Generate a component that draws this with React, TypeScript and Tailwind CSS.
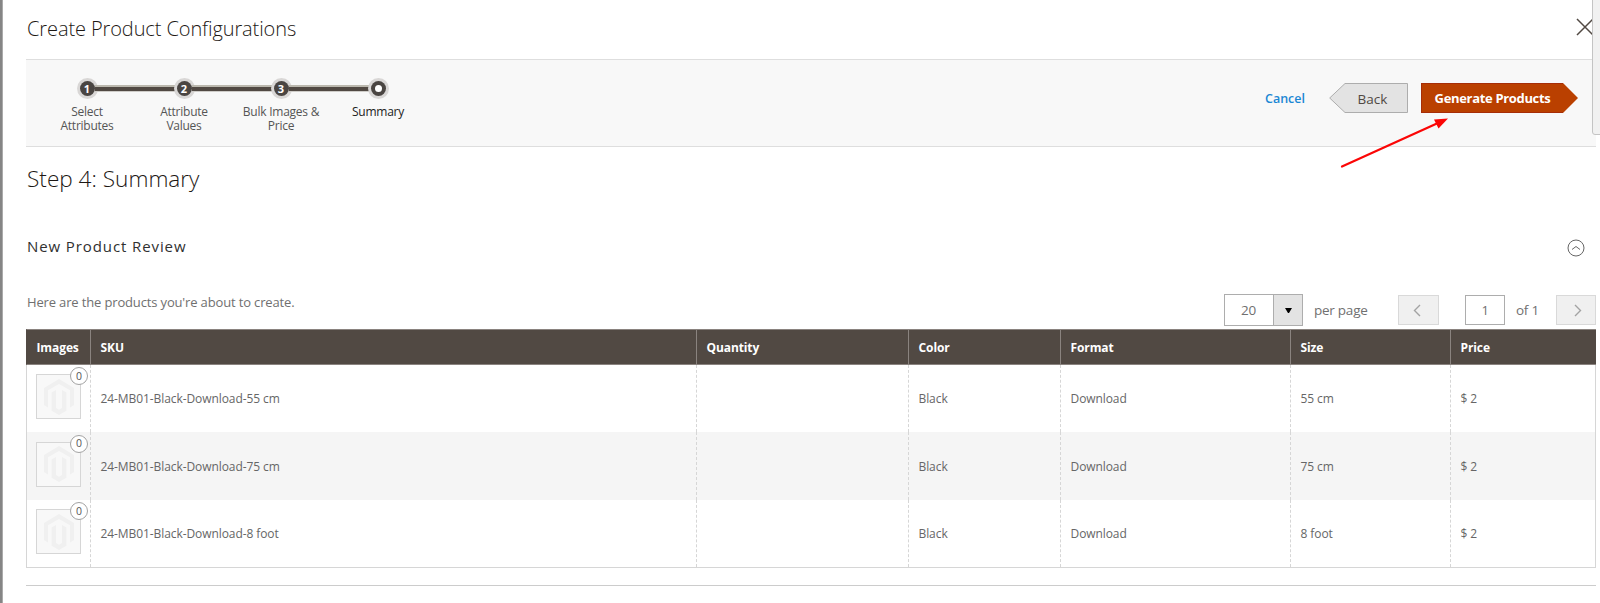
import React from "react";
import clsx from "clsx";

const steps = [
  { label: "Select Attributes", done: true },
  { label: "Attribute Values", done: true },
  { label: "Bulk Images & Price", done: true },
  { label: "Summary", done: false },
];

const columns = [
  { title: "Images", width: "w-[64px]" },
  { title: "SKU", width: "w-[606px]" },
  { title: "Quantity", width: "w-[212px]" },
  { title: "Color", width: "w-[152px]" },
  { title: "Format", width: "w-[230px]" },
  { title: "Size", width: "w-[160px]" },
  { title: "Price", width: "w-[146px]" },
];

const products = [
  { sku: "24-MB01-Black-Download-55 cm", size: "55 cm" },
  { sku: "24-MB01-Black-Download-75 cm", size: "75 cm" },
  { sku: "24-MB01-Black-Download-8 foot", size: "8 foot" },
];

const Placeholder = () => (
  <div className="relative ml-[9px] mb-[4px] flex h-[45px] w-[45px] items-center justify-center border border-[#d6d6d6] bg-[#f8f8f8]">
    <svg width="30" height="36" viewBox="0 0 30 36" fill="#f0f0f0">
      <path d="M15 0 30 9v17l-4 2.5V11.3L15 5 4 11.3v17.2L0 26V9z" />
      <path d="M15 36l-7.4-4.3V13.6L12 11v18l3 1.8 3-1.8V11l4.4 2.6v18.1z" />
    </svg>
    <span className="absolute -top-[8px] -right-[8px] flex h-[18px] w-[18px] items-center justify-center rounded-full border border-[#a3a3a3] bg-white text-[10.5px] leading-none text-[#555]">
      0
    </span>
  </div>
);

const Steps = () => (
  <ul className="ml-[12.5px] flex pt-[18px]">
    {steps.map((step, i) => (
      <li key={step.label} className="relative w-[97px] text-center">
        {i > 0 && (
          <div className="absolute top-[7px] -left-[41px] h-[7px] w-[82px] border-t-2 border-b border-t-[#bbb8ae] border-b-[#cfcdc9] bg-[#514943]" />
        )}
        <div className="relative mx-auto flex h-[21px] w-[21px] items-center justify-center rounded-full bg-[#d9d7d6]">
          <div className="z-10 flex h-[15px] w-[15px] items-center justify-center rounded-full bg-[#4a4542] text-[11px] leading-none font-bold text-white">
            {step.done ? (
              i + 1
            ) : (
              <span className="h-[7px] w-[7px] rounded-full bg-white" />
            )}
          </div>
        </div>
        <p
          className={clsx(
            "mx-auto mt-[6px] w-[82px] text-[12px] leading-[13.6px] tracking-[-0.25px]",
            step.done ? "text-[#555]" : "text-[#222]"
          )}
        >
          {step.label}
        </p>
      </li>
    ))}
  </ul>
);

const Actions = () => (
  <div className="mr-[18px] flex h-[30px] items-center text-[13px]">
    <a className="mt-[2px] mr-[24px] text-[12.5px] font-semibold text-[#1b87d4]">
      Cancel
    </a>
    <button className="relative mr-[13px] h-[30px] w-[79px]">
      <svg className="absolute inset-0" width="79" height="30">
        <path d="M.7 15 16 .5h62.5v29H16z" fill="#e3e3e3" stroke="#adadad" />
      </svg>
      <span className="relative top-px left-[4px] text-[13.5px] text-[#514943]">
        Back
      </span>
    </button>
    <button className="relative h-[30px] w-[157px]">
      <svg className="absolute inset-0" width="157" height="30">
        <path d="M0 0h142l15 15-15 15H0z" fill="#ba4000" />
        <path d="M0 .5h142M0 29.5h142M.5 0v30" stroke="#a62d08" />
      </svg>
      <span className="relative top-px -left-[7px] text-[13px] font-bold tracking-[-0.33px] text-white">
        Generate Products
      </span>
    </button>
  </div>
);

const Pager = () => (
  <div className="flex items-center text-[13.5px] tracking-[-0.25px] text-[#707070]">
    <div className="flex h-[32px] w-[79px] border border-[#adadad]">
      <span className="flex flex-1 items-center justify-center pr-px">20</span>
      <span className="flex w-[29px] items-center justify-center border-l border-[#adadad] bg-[#e3e3e3]">
        <svg width="7" height="5">
          <path d="M0 0h7L4 5H3z" fill="#000" />
        </svg>
      </span>
    </div>
    <span className="ml-[11px] w-[84px]">per page</span>
    <button className="flex h-[30px] w-[41px] items-center justify-center border border-[#d9d9d9] bg-[#f0f0f0] pr-[3px]">
      <svg width="8" height="13" fill="none" stroke="#a3a3a3" strokeWidth="1.4">
        <path d="M7 1 1.5 6.5 7 12" />
      </svg>
    </button>
    <span className="ml-[26px] flex h-[30px] w-[40px] items-center justify-center border border-[#adadad] pt-px text-[13px]">
      1
    </span>
    <span className="ml-[11px] w-[40px]">of 1</span>
    <button className="flex h-[30px] w-[40px] items-center justify-center border border-[#d9d9d9] bg-[#f0f0f0] pl-[4px]">
      <svg width="8" height="13" fill="none" stroke="#a3a3a3" strokeWidth="1.4">
        <path d="M1 1l5.5 5.5L1 12" />
      </svg>
    </button>
  </div>
);

const App = () => {
  return (
    <div className="relative flex h-[603px] w-[1600px] overflow-hidden bg-white font-['Open_Sans',sans-serif] text-[#555]">
      <div className="w-[3px] shrink-0 border-r border-[#aaa] bg-[#858585]" />
      <div className="ml-[23px] w-[1570px] shrink-0">
        <header className="flex h-[59px] items-center justify-between">
          <h1 className="-mt-[2px] ml-px text-[20px] leading-[28px] font-light tracking-[-0.1px] text-[#1d1814]">
            Create Product Configurations
          </h1>
          <svg className="mt-[-6px] mr-[2px]" width="18" height="18" stroke="#514943" strokeWidth="1.5">
            <path d="M1 1l16 16M17 1 1 17" />
          </svg>
        </header>

        <div className="flex h-[88px] justify-between border-y border-[#dedede] bg-[#f8f8f8]">
          <Steps />
          <div className="pt-[23px]">
            <Actions />
          </div>
        </div>

        <h2 className="mt-[17px] ml-px text-[22.6px] leading-[30px] font-light text-[#1d1814]">
          Step 4: Summary
        </h2>

        <div className="mt-[43px] flex h-[22px] items-center justify-between">
          <h3 className="-mt-[3px] ml-px text-[15px] font-normal tracking-[0.9px] text-[#303030]">
            New Product Review
          </h3>
          <svg className="mr-[11px]" width="18" height="18" fill="none" stroke="#666">
            <circle cx="9" cy="9" r="8" />
            <path d="M5 10.5 9 7.5l4 3" />
          </svg>
        </div>

        <div className="mt-[35px] flex h-[35px] justify-between">
          <p className="-mt-px ml-px text-[13px] leading-[18px] tracking-[-0.15px] text-[#707070]">
            Here are the products you're about to create.
          </p>
          <div className="h-[32px]">
            <Pager />
          </div>
        </div>

        <table className="w-[1570px] table-fixed border-separate border-spacing-0">
          <thead>
            <tr className="h-[36px]">
              {columns.map((column, i) => (
                <th
                  key={column.title}
                  className={clsx(
                    column.width,
                    "border-y border-l border-y-[#8a837f] bg-[#514943] p-0 pt-px pl-[9.5px] text-left text-[12px] font-bold tracking-[-0.1px] text-white",
                    i === 0 ? "border-l-[#514943]" : "border-l-[#8a837f]"
                  )}
                >
                  {column.title}
                </th>
              ))}
            </tr>
          </thead>
          <tbody className="text-[12px] tracking-[-0.08px] text-[#666]">
            {products.map((product, row) => (
              <tr
                key={product.sku}
                className={clsx(row === 1 ? "h-[68px] bg-[#f5f5f5]" : "h-[67px]")}
              >
                <td className="border-l border-[#d6d6d6] p-0">
                  <Placeholder />
                </td>
                {[product.sku, "", "Black", "Download", product.size, "$ 2"].map(
                  (value, i) => (
                    <td
                      key={i}
                      className={clsx(
                        "border-l border-l-[#d6d6d6] p-0 pt-px pl-[9.5px] [border-left-style:dashed]",
                        i === 5 && "border-r border-r-[#d6d6d6]"
                      )}
                    >
                      {value}
                    </td>
                  )
                )}
              </tr>
            ))}
          </tbody>
        </table>
        <div className="border-t border-[#d6d6d6]" />
        <div className="mt-[17px] border-t border-[#ccc]" />
      </div>

      {/* edge of the panel that overlaps the modal */}
      <div className="absolute top-[-6px] right-[-8px] h-[141px] w-[16px] rounded-[3px] border border-[#c4c4c4] bg-[#f1f1f1]" />

      {/* pointer to the generate button */}
      <svg className="absolute top-[115px] left-[1338px]" width="114" height="56">
        <path d="M4 51.5 100 8" stroke="#fb0606" strokeWidth="2.2" strokeLinecap="round" />
        <path d="M110 3.5 96 4.5l4.5 9z" fill="#fb0606" />
      </svg>
    </div>
  );
};

export default App;
